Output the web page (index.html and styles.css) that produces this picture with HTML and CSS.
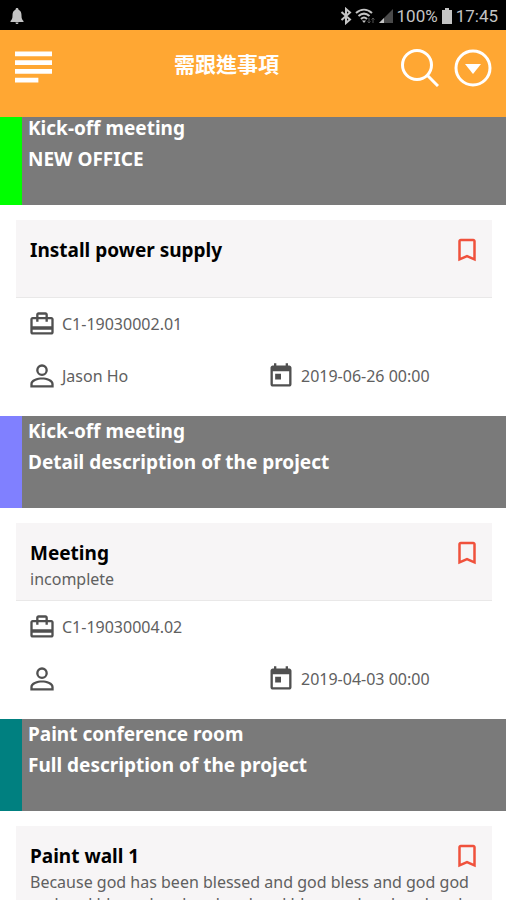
FILE: index.html
```html
<!DOCTYPE html>
<html lang="zh-Hant">
<head>
<meta charset="utf-8">
<meta name="viewport" content="width=device-width, initial-scale=1">
<title>需跟進事項</title>
<link rel="stylesheet" href="styles.css">
</head>
<body>
<svg class="sprite" aria-hidden="true">
  <symbol id="bookmark" viewBox="0 0 24 24"><path d="M17 3H7c-1.100 0-2 .9-2 2v16l7-3 7 3V5c0-1.100-.9-2-2-2zm0 15l-5-2.180L7 18V5h10v13z"/></symbol>
  <symbol id="case" viewBox="0 0 24 24"><path d="M20 6h-3V4c0-1.110-.89-2-2-2H9c-1.110 0-2 .89-2 2v2H4c-1.110 0-2 .89-2 2v11c0 1.110.89 2 2 2h16c1.110 0 2-.89 2-2V8c0-1.110-.89-2-2-2zM9 4h6v2H9V4zm11 15H4v-2h16v2zm0-5H4V8h3v2h2V8h6v2h2V8h3v6z"/></symbol>
  <symbol id="person" viewBox="0 0 24 24"><path fill-rule="evenodd" d="M12 2a5 5 0 1 0 0 10 5 5 0 0 0 0-10zm0 2a3 3 0 1 1 0 6 3 3 0 0 1 0-6zM12 13.300c-4 0-10 1.500-10 5.500v3h20v-3c0-4-6-5.500-10-5.500zm0 1.800c3.500 0 8 1.700 8 3.700v1.200H4v-1.200c0-2 4.500-3.700 8-3.700z"/></symbol>
  <symbol id="calendar" viewBox="0 0 24 24"><path d="M19 3h-1V1h-2v2H8V1H6v2H5c-1.110 0-2 .9-2 2v14c0 1.100.89 2 2 2h14c1.100 0 2-.9 2-2V5c0-1.100-.9-2-2-2zm0 16H5V8h14v11zM7 10h5v5H7z"/></symbol>
</svg>

<div class="top">
  <div class="status">
    <svg class="bell" viewBox="0 0 14 18"><path d="M7 1c1 0 1.500.7 1.500 1.700C11 3.500 11.500 6 11.500 8.500c0 3 .5 4 2 5.500v1H.5v-1c1.500-1.500 2-2.500 2-5.500C2.500 6 3 3.500 5.500 2.700 5.500 1.700 6 1 7 1zM5.500 15.500h3c0 2-3 2-3 0z"/></svg>
    <div class="status-right">
      <svg class="bluetooth" viewBox="0 0 12 18"><path d="M1.500 5l8.500 7.500-4 3.500V2l4 3.500L1.500 13"/></svg>
      <svg class="wifi" viewBox="0 0 20 18"><path d="M1 6c5-4.500 11-4.500 16 0M3.500 9c3.500-3 7.500-3 11 0M6 12c2-2 4-2 6 0"/><path class="solid" d="M7 13.500h4L9 16z"/><path class="dim" d="M14 11v5M12.500 14.500L14 16l1.500-1.500M18 16v-5M16.500 12.500L18 11l1.500 1.500"/></svg>
      <svg class="signal" viewBox="0 0 16 18"><path class="faint" d="M15 2v14H1z"/><path d="M6 11v5H1z"/></svg>
      <span>100%</span>
      <svg class="battery" viewBox="0 0 12 18"><path d="M4 1h4v2h3v14H1V3h3z"/></svg>
      <span>17:45</span>
    </div>
  </div>
  <header class="bar">
    <button class="icon-button" aria-label="選單"><svg class="menu" viewBox="0 0 38 34"><path d="M0 0h38v5H0zM0 9h38v5H0zM0 18h38v5H0zM0 27h24v5H0z"/></svg></button>
    <h1>需跟進事項</h1>
    <div class="actions">
      <button class="icon-button" aria-label="搜尋"><svg class="search" viewBox="0 0 38 38"><circle cx="16" cy="16" r="14.500"/><path d="M26.500 26.500L37 37"/></svg></button>
      <button class="icon-button" aria-label="更多"><svg class="more" viewBox="0 0 38 38"><circle cx="19" cy="19" r="17"/><path d="M11 15h16l-8 10z"/></svg></button>
    </div>
  </header>
</div>

<main>
  <section>
    <div class="project green"><h2>Kick-off meeting</h2><p>NEW OFFICE</p></div>
    <article class="task">
      <div class="summary">
        <h3>Install power supply</h3>
        <button class="icon-button" aria-label="書籤"><svg class="bookmark"><use href="#bookmark"/></svg></button>
      </div>
      <div class="details">
        <div class="detail wide"><svg><use href="#case"/></svg><span>C1-19030002.01</span></div>
        <div class="detail"><svg><use href="#person"/></svg><span>Jason Ho</span></div>
        <div class="detail"><svg><use href="#calendar"/></svg><span>2019-06-26 00:00</span></div>
      </div>
    </article>
  </section>
  <section>
    <div class="project violet"><h2>Kick-off meeting</h2><p>Detail description of the project</p></div>
    <article class="task">
      <div class="summary">
        <h3>Meeting</h3>
        <button class="icon-button" aria-label="書籤"><svg class="bookmark"><use href="#bookmark"/></svg></button>
        <p>incomplete</p>
      </div>
      <div class="details">
        <div class="detail wide"><svg><use href="#case"/></svg><span>C1-19030004.02</span></div>
        <div class="detail"><svg><use href="#person"/></svg></div>
        <div class="detail"><svg><use href="#calendar"/></svg><span>2019-04-03 00:00</span></div>
      </div>
    </article>
  </section>
  <section>
    <div class="project teal"><h2>Paint conference room</h2><p>Full description of the project</p></div>
    <article class="task">
      <div class="summary">
        <h3>Paint wall 1</h3>
        <button class="icon-button" aria-label="書籤"><svg class="bookmark"><use href="#bookmark"/></svg></button>
        <p>Because god has been blessed and god bless and god god and god blessed and god and god bless and god god god</p>
      </div>
    </article>
  </section>
</main>
</body>
</html>
```
FILE: styles.css
```css
* { box-sizing: border-box; }
body {
  margin: 0;
  height: 100vh;
  display: flex;
  flex-direction: column;
  overflow: hidden;
  background: #fff;
  color: #606060;
  font: 16px/22px "Noto Sans", "Noto Sans CJK TC", sans-serif;
}
h1, h2, h3, p { margin: 0; }
svg { display: block; flex: none; fill: currentColor; }
.sprite { position: absolute; width: 0; height: 0; }
.icon-button { display: block; flex: none; padding: 0; border: 0; background: none; color: inherit; }

.top { position: relative; z-index: 1; flex: none; }
.status {
  display: flex;
  align-items: center;
  justify-content: space-between;
  height: 30px;
  padding: 2px 8px 0 10px;
  background: #000;
  color: #c4c4c4;
  font: 17px/28px Roboto, sans-serif;
}
.status-right { display: flex; align-items: center; gap: 3px; }
.bell { width: 14px; height: 18px; }
.bluetooth { width: 12px; height: 18px; fill: none; stroke: currentColor; stroke-width: 2; }
.wifi { width: 20px; height: 18px; fill: none; stroke: currentColor; stroke-width: 2; }
.wifi .solid { fill: currentColor; stroke: none; }
.wifi .dim { stroke: #555; stroke-width: 1; }
.signal { width: 16px; height: 18px; }
.signal .faint { fill: #4a4a4a; }
.battery { width: 12px; height: 18px; }

.bar {
  display: flex;
  align-items: flex-start;
  height: 87px;
  padding: 19px 14px 0 15px;
  background: #ffa733;
  color: #fff;
}
.bar h1 { flex: 1; text-align: center; font: bold 21px/28px "Noto Sans CJK TC", sans-serif; }
.menu { width: 37px; height: 34px; margin-top: 2px; }
.actions { display: flex; gap: 15px; }
.search, .more { width: 38px; height: 38px; }
.search { fill: none; stroke: currentColor; stroke-width: 3; }
.more circle { fill: none; stroke: currentColor; stroke-width: 3; }

main { flex: 1; min-height: 0; margin-top: -4px; overflow: hidden; }
.project {
  min-height: 92px;
  padding: 0 6px;
  border-left: 22px solid;
  background: #7a7a7a;
}
.project h2, .project p { color: #fff; font-size: 19px; line-height: 31px; font-weight: bold; }
.green { border-color: #0f0; }
.violet { border-color: #8080ff; }
.teal { border-color: #008080; }

.task { padding: 15px 14px 0 16px; }
.summary {
  display: grid;
  grid-template-columns: 1fr auto;
  align-content: start;
  min-height: 78px;
  padding: 15px 10px 10px 14px;
  border-bottom: 1px solid #e9e8e8;
  background: #f7f5f6;
}
.summary h3 { color: #000; font-size: 19px; line-height: 30px; }
.summary p { grid-column: 1 / -1; }
.bookmark { width: 30px; height: 30px; color: #f0513c; }
.details {
  display: grid;
  grid-template-columns: 1fr 1fr;
  column-gap: 14px;
  padding: 0 0 14px 12px;
}
.detail { display: flex; align-items: center; gap: 6px; height: 52px; }
.detail.wide { grid-column: 1 / -1; }
.detail svg { width: 28px; height: 28px; color: #505050; }
```
